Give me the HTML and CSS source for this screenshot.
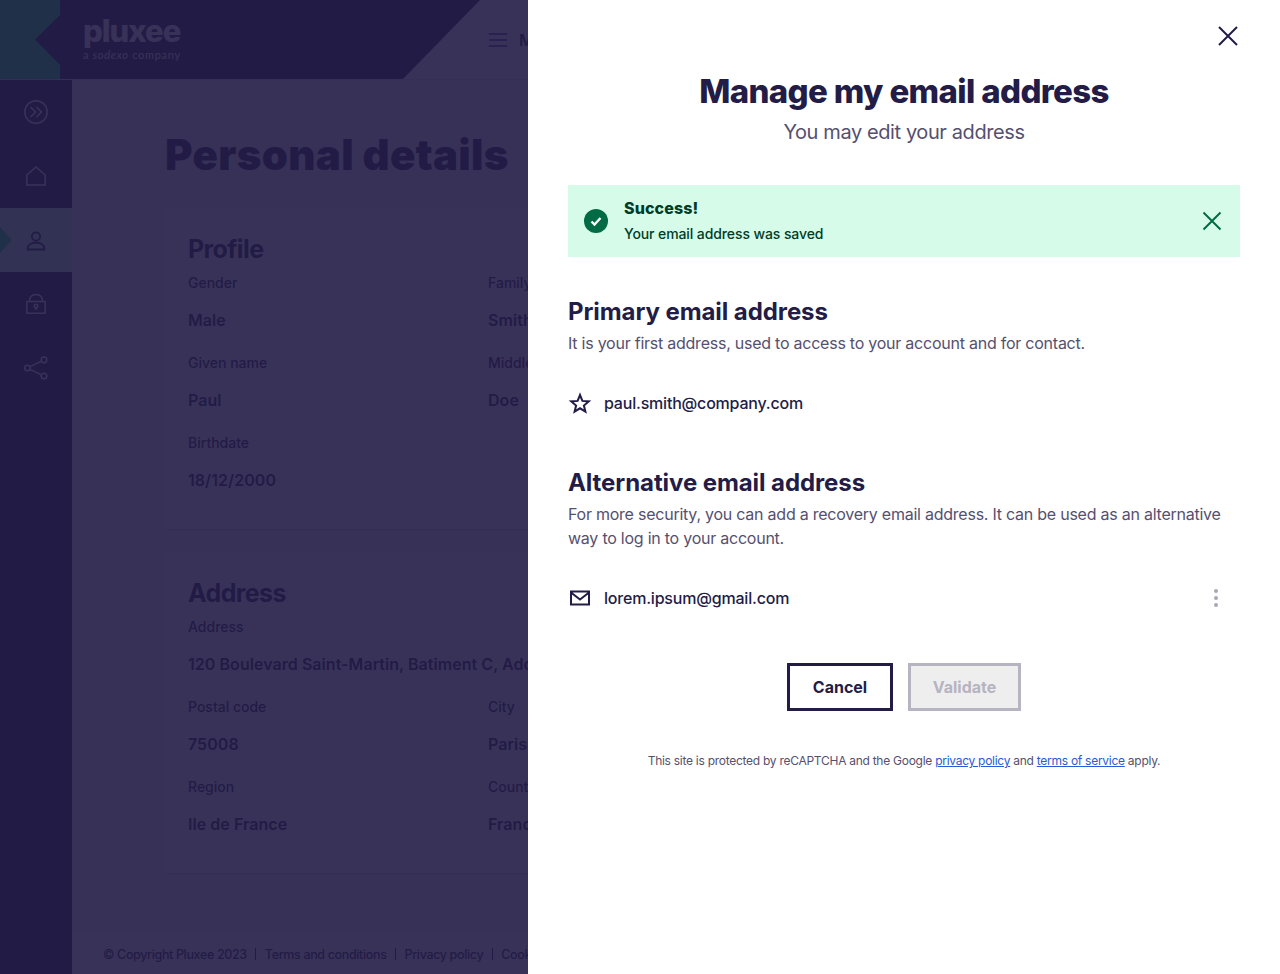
FILE: index.html

```html
<!DOCTYPE html>
<html lang="en">
<head>
  <meta charset="UTF-8">
  <title>Personal details</title>
  <link rel="stylesheet" href="styles.css">
</head>
<body>
  <header class="topbar">
    <div class="topbar-mark"></div>
    <div class="topbar-brand">
      <div class="logo">pluxee</div>
      <div class="logo-sub">a <em>sodexo</em> company</div>
    </div>
    <div class="topbar-menu">
      <svg class="burger" width="18" height="14" viewBox="0 0 18 14"><path d="M0 1h18M0 7h18M0 13h18" fill="none" stroke="#2a2a8c" stroke-width="1.5"/></svg>
      <span class="menu-label">Menu</span>
    </div>
  </header>

  <div class="page">
    <nav class="sidebar">
      <a class="nav-item">
        <svg width="24" height="24" viewBox="0 0 24 24" fill="none" stroke="#fff" stroke-width="1.5"><circle cx="12" cy="12" r="11.2"/><path d="M6.500 7l5 5-5 5M12.500 7l5 5-5 5"/></svg>
      </a>
      <a class="nav-item">
        <svg width="24" height="24" viewBox="0 0 24 24" fill="none" stroke="#fff" stroke-width="1.5"><path d="M2.800 21V11L12 3l9.200 8v10z"/></svg>
      </a>
      <a class="nav-item nav-item-active">
        <svg width="24" height="24" viewBox="0 0 24 24" fill="none" stroke="#221c46" stroke-width="1.800"><circle cx="12" cy="8.500" r="4.200"/><path d="M3.500 21.500c0-4.500 3.500-7 8.500-7s8.500 2.500 8.500 7z"/></svg>
      </a>
      <a class="nav-item">
        <svg width="24" height="24" viewBox="0 0 24 24" fill="none" stroke="#fff" stroke-width="1.5"><path d="M2.800 9.500h18.400v11.800H2.800zM5.500 9.500C5.500 5 8 2.500 12 2.500s6.500 2.500 6.500 7"/><circle cx="12" cy="14" r="1.800"/><path d="M12 15.500v2.500"/></svg>
      </a>
      <a class="nav-item">
        <svg width="24" height="24" viewBox="0 0 24 24" fill="none" stroke="#fff" stroke-width="1.5"><circle cx="3.500" cy="12" r="2.800"/><circle cx="20" cy="3.900" r="2.800"/><circle cx="20" cy="20.100" r="2.800"/><path d="M6 10.700l11.500-5.600M6 13.300l11.500 5.600"/></svg>
      </a>
    </nav>

    <main class="main">
      <h1 class="page-title">Personal details</h1>

      <section class="card">
        <h2 class="card-title">Profile</h2>
        <div class="fields">
          <div class="field"><div class="field-label">Gender</div><div class="field-value">Male</div></div>
          <div class="field"><div class="field-label">Family name</div><div class="field-value">Smith</div></div>
          <div class="field"><div class="field-label">Given name</div><div class="field-value">Paul</div></div>
          <div class="field"><div class="field-label">Middle name</div><div class="field-value">Doe</div></div>
          <div class="field"><div class="field-label">Birthdate</div><div class="field-value">18/12/2000</div></div>
        </div>
      </section>

      <section class="card card-address">
        <h2 class="card-title">Address</h2>
        <div class="fields">
          <div class="field field-wide"><div class="field-label">Address</div><div class="field-value">120 Boulevard Saint-Martin, Batiment C, Address line 2</div></div>
          <div class="field"><div class="field-label">Postal code</div><div class="field-value">75008</div></div>
          <div class="field"><div class="field-label">City</div><div class="field-value">Paris</div></div>
          <div class="field"><div class="field-label">Region</div><div class="field-value">Ile de France</div></div>
          <div class="field"><div class="field-label">Country</div><div class="field-value">France</div></div>
        </div>
      </section>

      <footer class="page-footer">
        <span>© Copyright Pluxee 2023</span><i></i><span>Terms and conditions</span><i></i><span>Privacy policy</span><i></i><span>Cookies</span>
      </footer>
    </main>
  </div>

  <div class="overlay"></div>

  <aside class="drawer">
    <div class="drawer-top">
      <button class="icon-btn">
        <svg width="20" height="20" viewBox="0 0 20 20"><path d="M1 1l18 18M19 1 1 19" fill="none" stroke="#221c46" stroke-width="2"/></svg>
      </button>
    </div>
    <h2 class="drawer-title">Manage my email address</h2>
    <p class="drawer-sub">You may edit your address</p>

    <div class="alert">
      <svg width="24" height="24" viewBox="0 0 24 24"><circle cx="12" cy="12" r="12" fill="#006b45"/><path d="M7.500 12.500l3 3 6-6.500" fill="none" stroke="#fff" stroke-width="2.400"/></svg>
      <div class="alert-text">
        <div class="alert-title">Success!</div>
        <div class="alert-msg">Your email address was saved</div>
      </div>
      <svg class="alert-close" width="20" height="20" viewBox="0 0 20 20"><path d="M1.500 1.500l17 17M18.500 1.500l-17 17" fill="none" stroke="#006b45" stroke-width="2"/></svg>
    </div>

    <h3 class="section-title">Primary email address</h3>
    <p class="section-text">It is your first address, used to access to your account and for contact.</p>
    <div class="email-row">
      <svg width="24" height="24" viewBox="0 0 24 24"><path d="M12 4l2.400 5.900 6.400.5-4.900 4.100 1.500 6.200-5.400-3.400-5.400 3.400 1.500-6.200-4.900-4.100 6.400-.5z" fill="none" stroke="#221c46" stroke-width="2"/></svg>
      <span>paul.smith@company.com</span>
    </div>

    <h3 class="section-title section-title-alt">Alternative email address</h3>
    <p class="section-text">For more security, you can add a recovery email address. It can be used as an alternative way to log in to your account.</p>
    <div class="email-row">
      <svg width="24" height="24" viewBox="0 0 24 24"><path d="M3 5.500h18v13H3zM3 6.500l9 7 9-7" fill="none" stroke="#221c46" stroke-width="2"/></svg>
      <span>lorem.ipsum@gmail.com</span>
      <div class="kebab"><i></i><i></i><i></i></div>
    </div>

    <div class="actions">
      <button class="btn">Cancel</button>
      <button class="btn btn-disabled">Validate</button>
    </div>

    <p class="recaptcha">This site is protected by reCAPTCHA and the Google <a href="#">privacy policy</a> and <a href="#">terms of service</a> apply.</p>
  </aside>
</body>
</html>
```

FILE: styles.css

```css
* {
  box-sizing: border-box;
}

html, body {
  height: 100%;
}

body {
  margin: 0;
  height: 974px;
  overflow: hidden;
  font-family: "Inter", "Liberation Sans", sans-serif;
  color: #221c46;
  background: #fff;
}

/* top bar */
.topbar {
  display: flex;
  height: 80px;
  border-bottom: 1px solid #d8dce8;
}

.topbar-mark {
  width: 60px;
  background: #00eb5e;
}

.topbar-brand {
  width: 445px;
  margin-left: -25px;
  padding: 16px 0 0 48px;
  background: #221c46;
  color: #fff;
  clip-path: polygon(0 50%, 25px 15px, 25px 0, 445px 0, 368px 100%, 25px 100%, 25px 65px);
}

.logo {
  height: 32px;
  font-size: 31px;
  line-height: 30px;
  font-weight: 800;
  letter-spacing: -1px;
}

.logo-sub {
  font-size: 11px;
  line-height: 14px;
  font-family: "Lato", sans-serif;
  letter-spacing: 0.7px;
}

.topbar-menu {
  display: flex;
  align-items: center;
  gap: 12px;
  margin-left: 9px;
}

.menu-label {
  font-size: 16px;
  font-weight: 600;
}

/* page */
.page {
  display: flex;
  height: 894px;
}

.sidebar {
  width: 72px;
  flex: none;
  background: #221c46;
}

.nav-item {
  display: flex;
  align-items: center;
  justify-content: center;
  height: 64px;
  position: relative;
}

.nav-item-active {
  background: #c3ffdc;
}

.nav-item-active::before {
  content: "";
  position: absolute;
  left: 0;
  top: 19px;
  border-left: 12px solid #00eb5e;
  border-top: 13px solid transparent;
  border-bottom: 13px solid transparent;
}

.main {
  flex: 1;
  min-width: 0;
  padding: 0 0 0 93px;
  background: #f4eef8;
  display: flex;
  flex-direction: column;
  position: relative;
}

.page-title {
  margin: 48px 0 32px;
  height: 48px;
  font-size: 42px;
  line-height: 54px;
  font-weight: 900;
  letter-spacing: 0.3px;
}

.card {
  width: 1000px;
  height: 322px;
  background: #fff;
  border-bottom: 1px solid #d8d6e6;
  padding: 26px 23px 0;
  margin-bottom: 23px;
}

.card-address {
  height: 321px;
  padding-top: 25px;
}

.card-title {
  margin: 0;
  font-size: 25px;
  line-height: 30px;
  font-weight: 700;
  letter-spacing: -0.6px;
}

.fields {
  display: grid;
  grid-template-columns: 300px 300px;
  grid-auto-rows: 80px;
  margin-top: 10px;
}

.field-wide {
  grid-column: 1 / 3;
  white-space: nowrap;
}

.field-label {
  font-size: 14px;
  line-height: 18px;
  font-weight: 500;
  color: #221c46;
}

.field-value {
  margin-top: 18px;
  font-size: 16px;
  line-height: 20px;
  font-weight: 600;
  letter-spacing: 0.05px;
}

.page-footer {
  position: absolute;
  left: 0;
  right: 0;
  bottom: 0;
  height: 40px;
  padding-left: 31px;
  display: flex;
  align-items: center;
  white-space: nowrap;
  background: #fff;
  font-size: 12.500px;
  font-weight: 500;
  letter-spacing: -0.35px;
}

.page-footer i {
  width: 1px;
  height: 12px;
  margin: 0 8.500px;
  background: #221c46;
}

.overlay {
  position: absolute;
  inset: 0;
  background: rgba(34, 28, 70, 0.9);
}

/* drawer */
.drawer {
  position: absolute;
  top: 0;
  right: 0;
  bottom: 0;
  width: 752px;
  padding: 0 40px;
  background: #fff;
}

.drawer-top {
  display: flex;
  justify-content: flex-end;
  height: 72px;
  padding-top: 26px;
}

.icon-btn {
  width: 20px;
  height: 20px;
  margin-right: 2px;
  padding: 0;
  border: 0;
  background: none;
}

.drawer-title {
  margin: 0;
  text-align: center;
  font-size: 33px;
  line-height: 38px;
  font-weight: 800;
  letter-spacing: -0.65px;
}

.drawer-sub {
  margin: 10px 0 0;
  text-align: center;
  font-size: 20px;
  line-height: 24px;
  color: #55506f;
  letter-spacing: -0.4px;
}

.alert {
  display: flex;
  align-items: center;
  height: 72px;
  margin-top: 41px;
  padding: 0 18px 0 16px;
  background: #d6fbe9;
  color: #003d28;
}

.alert-text {
  flex: 1;
  margin-left: 16px;
}

.alert-title {
  margin-top: -1px;
  font-size: 16px;
  line-height: 24px;
  font-weight: 800;
  letter-spacing: 0.1px;
}

.alert-msg {
  margin-top: 3px;
  font-size: 14px;
  line-height: 22px;
  font-weight: 500;
  letter-spacing: -0.1px;
}

.section-title {
  margin: 38px 0 0;
  font-size: 24px;
  line-height: 34px;
  font-weight: 700;
  letter-spacing: -0.08px;
}

.section-title-alt {
  margin-top: 51px;
}

.section-text {
  margin: 2px 0 0;
  font-size: 16px;
  line-height: 24px;
  color: #55506f;
  letter-spacing: -0.24px;
}

.email-row {
  display: flex;
  align-items: center;
  gap: 12px;
  height: 24px;
  margin-top: 36px;
  font-size: 16px;
  font-weight: 500;
  letter-spacing: -0.2px;
}

.kebab {
  display: flex;
  flex-direction: column;
  gap: 3px;
  margin-left: auto;
  margin-right: 22px;
}

.kebab i {
  width: 4px;
  height: 4px;
  border-radius: 50%;
  background: #a9a7b5;
}

.actions {
  display: flex;
  justify-content: center;
  gap: 15px;
  margin-top: 53px;
}

.btn {
  width: 106px;
  height: 48px;
  border: 3px solid #221c46;
  background: #fff;
  color: #221c46;
  font-family: inherit;
  font-size: 16px;
  font-weight: 700;
}

.btn-disabled {
  width: 113px;
  border-color: #b6b4c1;
  background: #eeeeef;
  color: #b6b4c1;
}

.recaptcha {
  margin: 41px 0 0;
  text-align: center;
  font-size: 12px;
  line-height: 18px;
  color: #55506f;
  letter-spacing: -0.27px;
}

.recaptcha a {
  color: #2a5ad6;
}
```
